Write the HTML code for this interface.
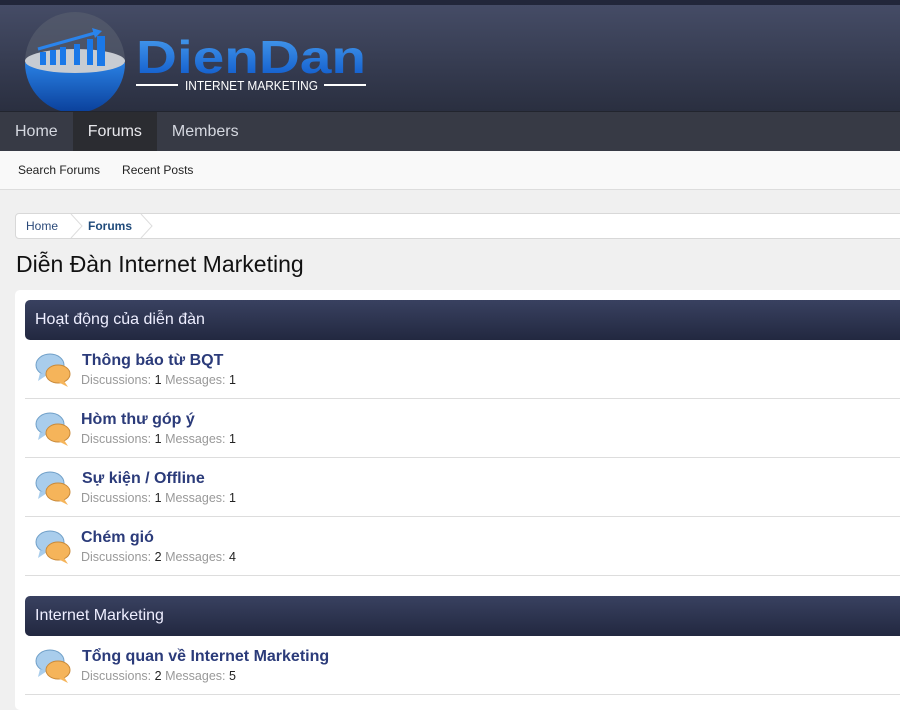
<!DOCTYPE html><html><head><meta charset="utf-8"><style>
body{margin:0;width:900px;height:700px;overflow:hidden;background:#f0f0f0;font-family:"Liberation Sans",Arial,sans-serif}
.top{height:5px;background:#22273a}
.hdr{height:106px;background:linear-gradient(#454c66,#2a2f40);position:relative}
.nav{height:39px;background:#373a45;display:flex;border-top:1px solid #22252e}
.nav div{color:#d5d8e0;font-size:16px;padding:0 15px;line-height:39px}
.nav .on{background:#2b2c31;color:#e8e8ec}
.sub{height:38px;background:#f9f9f9;border-bottom:1px solid #ddd;font-size:12px;color:#222;display:flex;align-items:center}
.sub span{margin-left:18px;margin-right:2px}
.bc{position:absolute;left:15px;top:213px;width:900px;height:24px;border:1px solid #d8d8d8;border-radius:4px;background:#fff;font-size:12px}
.bc span{position:absolute;top:5px}
h1{position:absolute;left:16px;top:251px;margin:0;font-weight:normal;font-size:23px;color:#111}
.panel{position:absolute;left:15px;top:290px;width:900px;height:420px;background:#fff;border-radius:5px}
.cat{position:absolute;left:10px;width:880px;height:40px;border-radius:5px 0 0 5px;background:linear-gradient(#394160,#222840);color:#eef;font-size:16px;line-height:40px;padding-left:10px;box-sizing:border-box}
.row{position:absolute;left:10px;width:880px;height:58px;border-bottom:1px solid #ddd}
.row b{position:absolute;left:57px;top:12px;font-size:16px;color:#2b3b7a}
.row .m{position:absolute;left:56px;top:33px;font-size:12.5px;color:#999}
.row .m i{font-style:normal;color:#222}
.ic{position:absolute;left:9px;top:10px}
</style></head><body>
<div class="top"></div>
<div class="hdr">
<svg width="380" height="106" style="position:absolute;left:0;top:0">
<defs><linearGradient id="g" x1="0" y1="0" x2="0" y2="1"><stop offset="0" stop-color="#2f8cf0"/><stop offset="1" stop-color="#0a3f9a"/></linearGradient>
<linearGradient id="t" x1="0" y1="0" x2="0" y2="1"><stop offset="0" stop-color="#4aa0f0"/><stop offset="1" stop-color="#0b55c8"/></linearGradient></defs>
<circle cx="75" cy="57" r="50" fill="#5a6070" opacity=".6"/>
<path d="M25 58 A50 50 0 0 0 125 58 Q75 40 25 58Z" fill="url(#g)"/>
<ellipse cx="75" cy="56" rx="50" ry="12" fill="#c8ccd2"/>
<g fill="#1a78e8"><rect x="40" y="47" width="6" height="13"/><rect x="50" y="45" width="6" height="15"/><rect x="60" y="42" width="6" height="18"/><rect x="74" y="39" width="6" height="21"/><rect x="87" y="34" width="6" height="26"/><rect x="97" y="31" width="8" height="30"/></g>
<path d="M38 44 L95 28" stroke="#2a84ec" stroke-width="3"/><path d="M92 23 L102 26 L95 33Z" fill="#2a84ec"/>
<text x="136" y="68" font-family="Liberation Sans" font-weight="bold" font-size="46" fill="url(#t)" textLength="230" lengthAdjust="spacingAndGlyphs">DienDan</text>
<line x1="136" y1="80" x2="178" y2="80" stroke="#fff" stroke-width="2"/><line x1="324" y1="80" x2="366" y2="80" stroke="#fff" stroke-width="2"/>
<text x="185" y="85" font-family="Liberation Sans" font-size="13" fill="#fff" textLength="133" lengthAdjust="spacingAndGlyphs">INTERNET MARKETING</text>
</svg></div>
<div class="nav"><div>Home</div><div class="on">Forums</div><div>Members</div></div>
<div class="sub"><span>Search Forums</span><span style="margin-left:20px">Recent Posts</span></div>
<div class="bc"><span style="left:10px;color:#2b4a7a">Home</span><span style="left:72px;color:#1f4a7a;font-weight:bold">Forums</span>
<svg width="160" height="24" style="position:absolute;left:0;top:0"><path d="M55 0 L66 12 L55 24M125 0 L136 12 L125 24" stroke="#ddd" fill="none"/></svg></div>
<h1>Diễn Đàn Internet Marketing</h1>
<div class="panel">
<div class="cat" style="top:10px">Hoạt động của diễn đàn</div>
<div class="row" style="top:50px"><svg class="ic" width="40" height="40"><ellipse cx="16" cy="15" rx="14" ry="11" fill="#a9cdec" stroke="#6f9fc8"/><path d="M6 23 L4 31 L13 25Z" fill="#a9cdec"/><ellipse cx="24" cy="24" rx="12" ry="9" fill="#f5b45a" stroke="#c98a3a"/><path d="M30 31 L34 37 L24 32Z" fill="#f5b45a"/></svg><b>Thông báo từ BQT</b><div class="m">Discussions: <i>1</i> Messages: <i>1</i></div></div>
<div class="row" style="top:109px"><svg class="ic" width="40" height="40"><ellipse cx="16" cy="15" rx="14" ry="11" fill="#a9cdec" stroke="#6f9fc8"/><path d="M6 23 L4 31 L13 25Z" fill="#a9cdec"/><ellipse cx="24" cy="24" rx="12" ry="9" fill="#f5b45a" stroke="#c98a3a"/><path d="M30 31 L34 37 L24 32Z" fill="#f5b45a"/></svg><b style="left:56px">Hòm thư góp ý</b><div class="m">Discussions: <i>1</i> Messages: <i>1</i></div></div>
<div class="row" style="top:168px"><svg class="ic" width="40" height="40"><ellipse cx="16" cy="15" rx="14" ry="11" fill="#a9cdec" stroke="#6f9fc8"/><path d="M6 23 L4 31 L13 25Z" fill="#a9cdec"/><ellipse cx="24" cy="24" rx="12" ry="9" fill="#f5b45a" stroke="#c98a3a"/><path d="M30 31 L34 37 L24 32Z" fill="#f5b45a"/></svg><b>Sự kiện / Offline</b><div class="m">Discussions: <i>1</i> Messages: <i>1</i></div></div>
<div class="row" style="top:227px"><svg class="ic" width="40" height="40"><ellipse cx="16" cy="15" rx="14" ry="11" fill="#a9cdec" stroke="#6f9fc8"/><path d="M6 23 L4 31 L13 25Z" fill="#a9cdec"/><ellipse cx="24" cy="24" rx="12" ry="9" fill="#f5b45a" stroke="#c98a3a"/><path d="M30 31 L34 37 L24 32Z" fill="#f5b45a"/></svg><b style="left:56px">Chém gió</b><div class="m">Discussions: <i>2</i> Messages: <i>4</i></div></div>
<div class="cat" style="top:306px">Internet Marketing</div>
<div class="row" style="top:346px"><svg class="ic" width="40" height="40"><ellipse cx="16" cy="15" rx="14" ry="11" fill="#a9cdec" stroke="#6f9fc8"/><path d="M6 23 L4 31 L13 25Z" fill="#a9cdec"/><ellipse cx="24" cy="24" rx="12" ry="9" fill="#f5b45a" stroke="#c98a3a"/><path d="M30 31 L34 37 L24 32Z" fill="#f5b45a"/></svg><b>Tổng quan về Internet Marketing</b><div class="m">Discussions: <i>2</i> Messages: <i>5</i></div></div>
</div>
</body></html>
